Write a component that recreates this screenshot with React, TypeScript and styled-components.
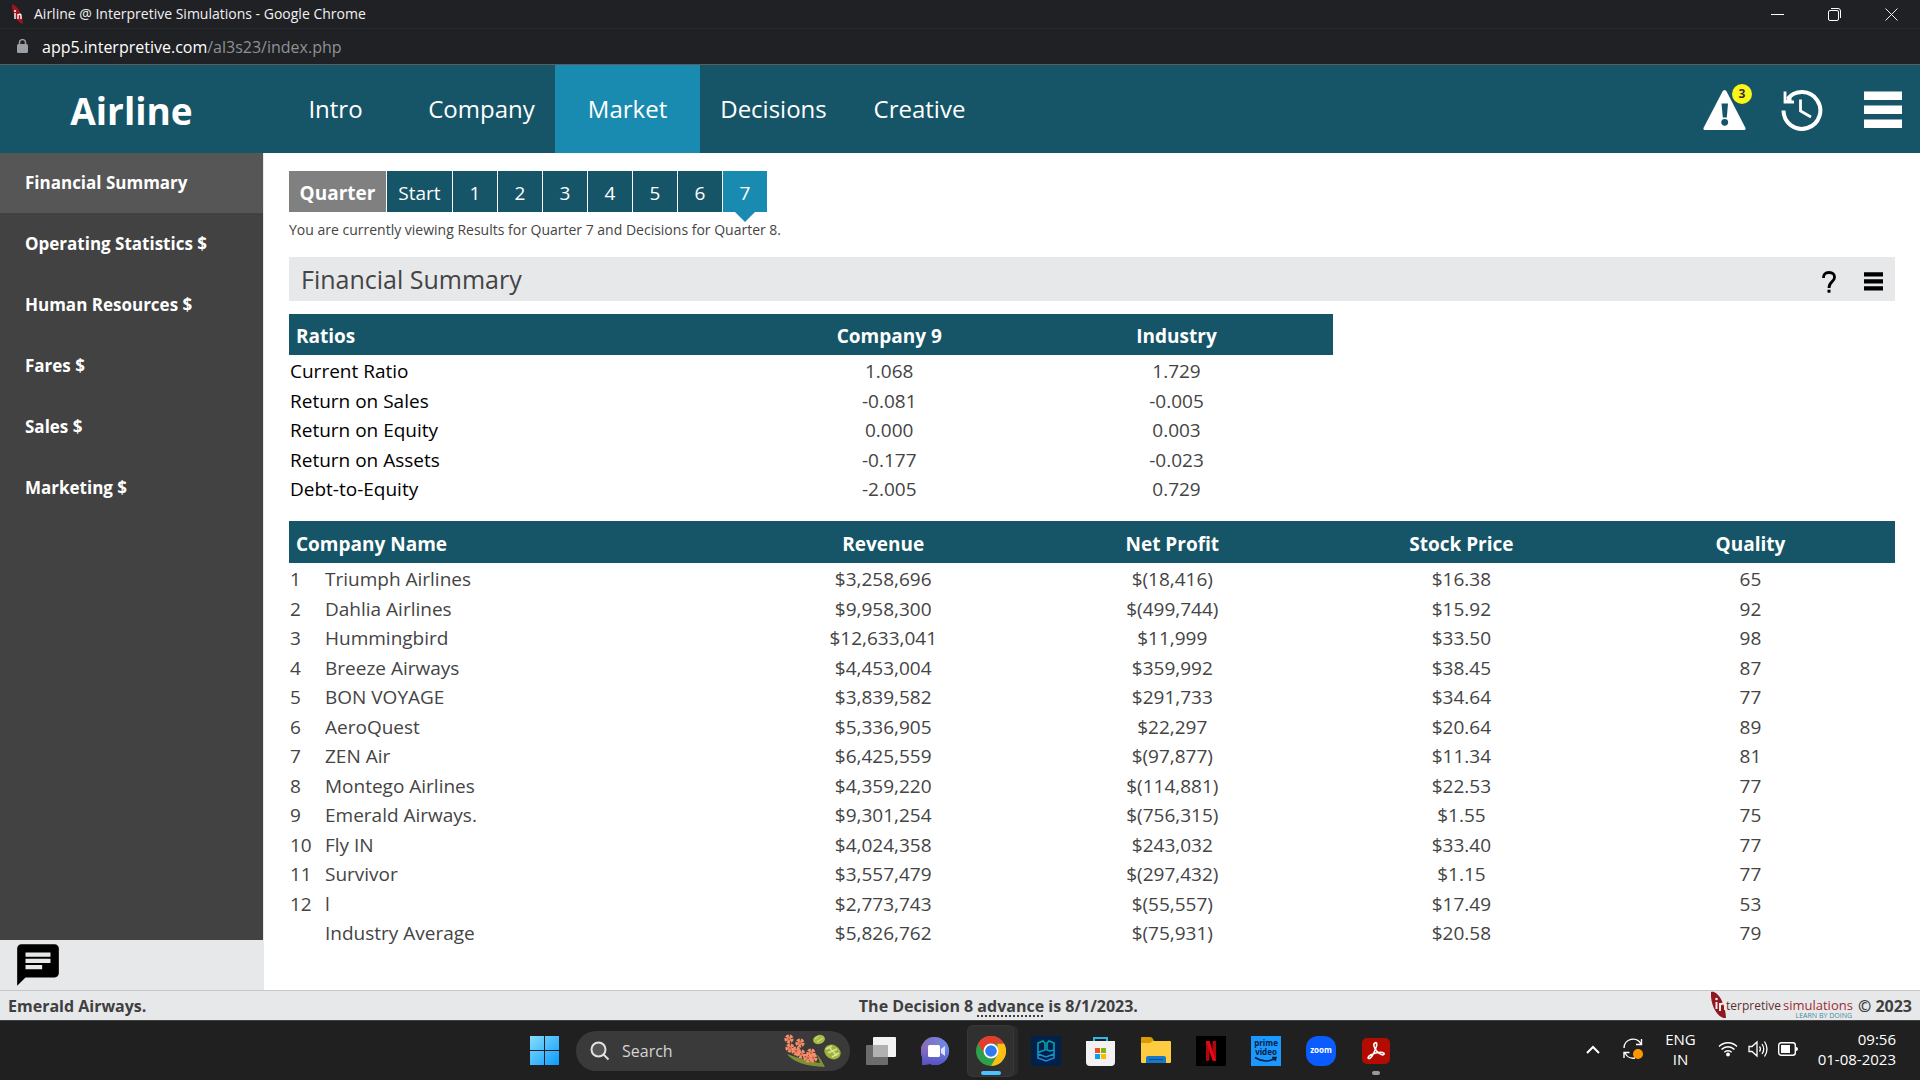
import React from "react";
import styled, { createGlobalStyle, css } from "styled-components";

const teal = "#165567";
const blue = "#1a8bb0";
const pale = "#e7e8ea";

const GlobalStyle = createGlobalStyle`
  * { box-sizing: border-box; }
  body {
    margin: 0;
    background: #fff;
    color: #444;
    font-family: "Open Sans", "Noto Sans", sans-serif;
    font-size: 19px;
  }
  button, input { font: inherit; color: inherit; }
  button { border: 0; padding: 0; background: none; cursor: pointer; }
  a { color: inherit; text-decoration: none; }
  svg { display: block; }
`;

const Screen = styled.div`
  display: flex;
  flex-direction: column;
  min-height: 100vh;
`;

/* ---------- browser window ---------- */

const TitleBar = styled.header`
  display: flex;
  align-items: center;
  height: 29px;
  padding: 0 12px;
  gap: 10px;
  background: #202124;
  border-bottom: 1px solid #27282b;
  color: #f1f1f1;
  font-size: 14px;
  line-height: 28px;
`;

const WindowButtons = styled.div`
  display: flex;
  gap: 31px;
  margin-left: auto;
`;

const WindowButton = styled.button`
  display: grid;
  place-items: center;
  width: 26px;
  height: 26px;
  &:last-child { margin-right: 4px; }
`;

const AddressBar = styled.div`
  display: flex;
  align-items: center;
  gap: 14px;
  height: 36px;
  padding: 0 17px;
  background: #202124;
  border-bottom: 1px solid #5d5d5f;
  color: #8f9195;
  font-size: 16px;
  strong { color: #fff; font-weight: 400; }
`;

/* ---------- application header ---------- */

const AppHeader = styled.header`
  display: flex;
  align-items: stretch;
  height: 88px;
  background: ${teal};
  color: #fff;
`;

const Brand = styled.h1`
  width: 263px;
  margin: 0;
  padding-top: 2px;
  font-size: 37px;
  line-height: 88px;
  text-align: center;
`;

const MainNav = styled.nav`
  display: flex;
  gap: 1px;
`;

const NavLink = styled.a<{ $active?: boolean }>`
  width: 145px;
  background: ${(p) => (p.$active ? blue : "transparent")};
  font-size: 24px;
  line-height: 88px;
  text-align: center;
`;

const HeaderTools = styled.div`
  display: grid;
  grid-template-columns: 43px 48px 38px;
  align-items: center;
  justify-items: start;
  column-gap: 35px;
  margin-left: auto;
  padding: 2px 18px 0 0;
`;

const ToolButton = styled.button`
  position: relative;
  color: inherit;
`;

const Badge = styled.span`
  position: absolute;
  top: -6px;
  right: -6px;
  width: 20px;
  height: 20px;
  border-radius: 50%;
  background: #fcf51a;
  color: #333;
  font-size: 12px;
  font-weight: 700;
  line-height: 20px;
  text-align: center;
`;

/* ---------- body ---------- */

const Body = styled.div`
  display: flex;
  flex: 1;
`;

const Sidebar = styled.aside`
  display: flex;
  flex-direction: column;
  width: 264px;
  background: ${pale};
`;

const SideNav = styled.nav`
  display: flex;
  flex: 1;
  flex-direction: column;
  gap: 1px;
  margin-right: 1px;
  background: #424242;
`;

const SideLink = styled.a<{ $active?: boolean }>`
  height: 60px;
  padding-left: 25px;
  background: ${(p) => (p.$active ? "#555655" : "transparent")};
  color: #fff;
  font-size: 17px;
  font-weight: 700;
  line-height: 60px;
`;

const ChatArea = styled.div`
  height: 50px;
  padding-left: 13px;
  color: #000;
`;

const Main = styled.main`
  flex: 1;
  padding: 18px 25px 32px;
`;

const QuarterBar = styled.div`
  display: flex;
  gap: 1px;
  height: 41px;
`;

const quarterCell = css`
  color: #fff;
  font-size: 19px;
  line-height: 44px;
  text-align: center;
`;

const QuarterLabel = styled.span`
  ${quarterCell}
  width: 97px;
  background: #808080;
  font-weight: 700;
`;

const QuarterButton = styled.button<{ $wide?: boolean; $active?: boolean }>`
  ${quarterCell}
  position: relative;
  width: ${(p) => (p.$wide ? 65 : 44)}px;
  background: ${(p) => (p.$active ? blue : teal)};
  ${(p) =>
    p.$active &&
    css`
      &::after {
        content: "";
        position: absolute;
        top: 100%;
        left: 12px;
        border: 10px solid transparent;
        border-top-color: ${blue};
        border-bottom-width: 0;
      }
    `}
`;

const ViewNote = styled.p`
  margin: 6px 0 15px;
  font-size: 14px;
  line-height: 24px;
`;

const SectionBar = styled.div`
  display: flex;
  align-items: center;
  height: 44px;
  padding: 0 12px;
  background: ${pale};
`;

const SectionTitle = styled.h2`
  margin: 0;
  font-size: 25px;
  font-weight: 400;
  line-height: 44px;
`;

const SectionTools = styled.div`
  display: flex;
  align-items: center;
  gap: 28px;
  margin-left: auto;
  padding-top: 5px;
  color: #000;
`;

const DataTable = styled.table<{ $narrow?: boolean }>`
  width: ${(p) => (p.$narrow ? "65%" : "100%")};
  margin-top: ${(p) => (p.$narrow ? 13 : 18)}px;
  border-collapse: collapse;
  table-layout: fixed;
  text-align: center;
  th { height: ${(p) => (p.$narrow ? 41 : 42)}px; }
`;

const HeadCell = styled.th<{ $first?: boolean; $inset?: boolean }>`
  padding: ${(p) => (p.$first ? "3px 0 0 7px" : p.$inset ? "3px 10px 0 0" : "3px 0 0")};
  background: ${teal};
  color: #fff;
  line-height: 26px;
  text-align: ${(p) => (p.$first ? "left" : "center")};
`;

const Row = styled.tr`
  height: 30px;
  line-height: 26px;
  vertical-align: top;
  &:nth-child(even) { height: 29px; }
`;

const Cell = styled.td<{ $left?: boolean; $dark?: boolean; $inset?: boolean }>`
  padding: 3px ${(p) => (p.$inset ? 10 : 0)}px 0 ${(p) => (p.$left ? 1 : 0)}px;
  color: ${(p) => (p.$dark ? "#000" : "#444")};
  text-align: ${(p) => (p.$left ? "left" : "center")};
`;

const StatusBar = styled.footer`
  display: grid;
  grid-template-columns: 20% 64% 16%;
  align-items: center;
  height: 30px;
  background: ${pale};
  border-top: 1px solid #c6c7c9;
  color: #3f3f3f;
  font-size: 16px;
  font-weight: 700;
  line-height: 28px;
`;

const StatusLeft = styled.span`
  padding-left: 8px;
`;

const StatusCenter = styled.span`
  text-align: center;
  abbr {
    text-decoration: underline dotted 2px;
    text-underline-offset: 4px;
  }
`;

const StatusRight = styled.span`
  display: flex;
  align-items: center;
  justify-content: flex-end;
  gap: 5px;
  padding-right: 8px;
`;

/* ---------- taskbar ---------- */

const TaskBar = styled.footer`
  display: grid;
  grid-template-columns: 1fr auto 1fr;
  align-items: center;
  height: 60px;
  background: #202020;
  border-top: 1px solid #404244;
  color: #fff;
`;

const TaskCenter = styled.div`
  grid-column: 2;
  display: flex;
  align-items: center;
  height: 100%;
`;

const TaskButton = styled.button<{ $current?: boolean; $open?: boolean }>`
  position: relative;
  display: grid;
  place-items: center;
  width: 45px;
  height: 50px;
  margin: 0 5px;
  border-radius: 5px;
  ${(p) => p.$current && "background: #303030; box-shadow: 0 0 0 1px #383838, 5px 0 0 #2b2b2b;"}
  ${(p) =>
    (p.$current || p.$open) &&
    css`
      &::after {
        content: "";
        position: absolute;
        bottom: 1px;
        left: 50%;
        width: ${p.$current ? 20 : 8}px;
        height: 4px;
        margin-left: ${p.$current ? -10 : -4}px;
        border-radius: 2px;
        background: ${p.$current ? "#4cc2ff" : "#9a9a9a"};
      }
    `}
`;

const SearchBox = styled.label`
  display: flex;
  align-items: center;
  gap: 12px;
  width: 274px;
  height: 40px;
  margin: 0 3px 0 4px;
  padding: 0 8px 0 14px;
  border-radius: 20px;
  background: #3a3a3a;
  input {
    flex: 1;
    min-width: 0;
    padding: 0;
    border: 0;
    outline: 0;
    background: none;
    font-size: 16px;
    &::placeholder { color: #d4d4d4; opacity: 1; }
  }
`;

const Tray = styled.div`
  display: flex;
  align-items: center;
  justify-content: flex-end;
  padding: 0 24px 3px 0;
  font-size: 15px;
  line-height: 20px;
`;

const TrayButton = styled.button<{ $gap?: number }>`
  margin-right: ${(p) => p.$gap ?? 0}px;
  text-align: center;
`;

const TrayClock = styled.div`
  text-align: right;
`;

/* ---------- drawings ---------- */

const Favicon = () => (
  <svg width="12" height="20" viewBox="0 0 12 20">
    <path d="M0 0C5 2 10 8 11 20C4 18 0 9 0 0Z" fill="#a3141c" />
    <path d="M3 9v6M6 15v-5M6 11q3-2 3 1v3" stroke="#fff" strokeWidth="1.4" fill="none" />
    <circle cx="3" cy="7" r="1" fill="#fff" />
  </svg>
);

const Lock = () => (
  <svg width="11" height="15" viewBox="0 0 11 15">
    <rect y="5" width="11" height="9" rx="1.5" fill="#9aa0a6" />
    <path d="M2.5 6V3.6a3 3 0 0 1 6 0V6" fill="none" stroke="#9aa0a6" strokeWidth="1.5" />
  </svg>
);

const Warning = () => (
  <svg width="43" height="40" viewBox="0 0 43 40">
    <path d="M21.5 0Q22.8 0 23.6 1.5L42.5 38q.5 2-1 2H1.5q-1.5 0-1-2L19.5 1.5Q20.3 0 21.5 0Z" fill="#fff" />
    <path d="M18.5 13.5h6.5l-1.2 14h-4z" fill={teal} />
    <circle cx="21.7" cy="32.3" r="3.4" fill={teal} />
  </svg>
);

const History = () => (
  <svg width="42" height="42" viewBox="0 0 42 42">
    <path d="M6.5 10A18.4 18.4 0 1 1 2.5 21.5" fill="none" stroke="#fff" strokeWidth="4" />
    <path d="M4 2.5V13H13" fill="none" stroke="#fff" strokeWidth="2.8" />
    <path d="M4 13L10 6v7z" fill="#fff" stroke="#fff" />
    <path d="M19.5 10.5V22L30 28" fill="none" stroke="#fff" strokeWidth="2.8" />
  </svg>
);

const Bars = ({ size }: { size: number }) => (
  <svg width={size} height={size} viewBox="0 0 38 38">
    <path d="M0 .5h38V9H0zM0 14.5h38V23H0zM0 28.5h38V37H0z" fill="currentColor" />
  </svg>
);

const Question = () => (
  <svg width="14" height="22" viewBox="0 0 14 22">
    <path d="M1.5 7Q1.3 1.5 7 1.5T12.5 6.5C12.5 10.5 7 11 7 17" fill="none" stroke="#000" strokeWidth="2.8" />
    <rect x="5.5" y="18.7" width="3" height="3" />
  </svg>
);

const Chat = () => (
  <svg width="50" height="50" viewBox="0 0 24 24">
    <path
      fill="currentColor"
      d="M20 2H4c-1.1 0-1.99.9-1.99 2L2 22l4-4h14c1.1 0 2-.9 2-2V4c0-1.1-.9-2-2-2zM6 9h12v2H6V9zm8 5H6v-2h8v2zm4-6H6V6h12v2z"
    />
  </svg>
);

const SimLogo = () => (
  <svg width="142" height="29" viewBox="0 0 142 29" fontFamily="Open Sans, Noto Sans, sans-serif" fontWeight="400">
    <path d="M0 1C5-1 14 9 15 27C6 28-1 13 0 1Z" fill="#8f1820" />
    <path d="M5.5 11v7M9 20v-8M9 14q5-4 5 1v4" fill="none" stroke="#f3e9e9" strokeWidth="2" />
    <circle cx="5.5" cy="8" r="1.3" fill="#f3e9e9" />
    <text x="15" y="19" fontSize="12" fill="#5f2f2e">terpretive</text>
    <text x="72" y="19" fontSize="13" fill="#a02c32">simulations</text>
    <text x="141" y="27" fontSize="7" textAnchor="end" fill="#3e8b9d">LEARN BY DOING</text>
  </svg>
);

const Windows = () => (
  <svg width="29" height="29" viewBox="0 0 29 29">
    <defs>
      <linearGradient id="win" x1="0" y1="0" x2="1" y2="1">
        <stop stopColor="#86ddfb" />
        <stop offset="1" stopColor="#0a9bff" />
      </linearGradient>
    </defs>
    <path d="M0 0h14v14H0zM15 0h14v14H15zM0 15h14v14H0zM15 15h14v14H15z" fill="url(#win)" />
  </svg>
);

const Magnifier = () => (
  <svg width="20" height="20" viewBox="0 0 20 20" fill="#555" stroke="#e2e2e2" strokeWidth="2">
    <circle cx="8.5" cy="8.5" r="7" />
    <path d="M13.5 13.5L18.5 18.5" />
  </svg>
);

const flowers = [[5, 5], [16, 9], [6, 14], [17, 20], [27, 19], [29, 24], [12, 17], [24, 24]];

const Bouquet = () => (
  <svg width="58" height="34" viewBox="0 0 58 34">
    <path d="M3 20Q12 32 41 33Q37 25 33 20L36 29Q22 27 3 20Z" fill="#7d9132" />
    {flowers.map(([x, y]) => (
      <g key={`${x}-${y}`}>
        <circle cx={x} cy={y} r="3.3" fill="none" stroke="#f6906c" strokeWidth="2.6" strokeDasharray="3 1" />
        <circle cx={x} cy={y} r="2.3" fill="#f08062" />
        <circle cx={x} cy={y} r=".8" fill="#963c2c" />
      </g>
    ))}
    <ellipse cx="35" cy="5.5" rx="6" ry="4.5" fill="#a8bb45" transform="rotate(-15 35 5.5)" />
    <path d="M31 5l4-3M33 8l6-4" stroke="#dbe394" />
    <ellipse cx="48.5" cy="18" rx="8.5" ry="7" fill="#9db33c" transform="rotate(30 48.5 18)" />
    <path d="M42 15l6-3M44 19l9-4M48 23l7-4M45 13l8 9" stroke="#dbe394" strokeWidth="1.5" />
  </svg>
);

const TaskView = () => (
  <svg width="30" height="28" viewBox="0 0 30 28">
    <rect x="7" width="23" height="20" rx="1" fill="#f3f3f3" />
    <rect y="8" width="22" height="20" rx="1" fill="#6c6c6c" />
    <path d="M7 8h15v12H7z" fill="#b1b1b1" />
  </svg>
);

const VideoChat = () => (
  <svg width="30" height="28" viewBox="0 0 30 28">
    <defs>
      <linearGradient id="vc" x1="0" y1="0" x2="1" y2="0">
        <stop stopColor="#8b68b4" />
        <stop offset="1" stopColor="#6a8cec" />
      </linearGradient>
      <linearGradient id="vcs" x1="0" y1="0" x2="0" y2="1">
        <stop offset=".4" stopColor="#5552c8" stopOpacity="0" />
        <stop offset="1" stopColor="#5552c8" />
      </linearGradient>
    </defs>
    <path d="M15 0a14 14 0 1 1-6 27L1 28V20A14 14 0 0 1 15 0Z" fill="url(#vc)" />
    <path d="M15 0a14 14 0 1 1-6 27L1 28V20A14 14 0 0 1 15 0Z" fill="url(#vcs)" />
    <rect x="7" y="8" width="12" height="12" rx="1.5" fill="#fff" />
    <path d="M20 12l4-3v10l-4-3z" fill="#e2e5ff" />
  </svg>
);

const Chrome = () => (
  <svg width="30" height="30" viewBox="0 0 48 48">
    <circle cx="24" cy="24" r="24" fill="#2da04b" />
    <path d="M44.8 12A24 24 0 0 1 24 48L34.4 30V12Z" fill="#fdbf13" />
    <path d="M3.2 12A24 24 0 0 1 44.8 12H24A12 12 0 0 0 13.6 30Z" fill="#e63c30" />
    <circle cx="24" cy="24" r="12" fill="#fff" />
    <circle cx="24" cy="24" r="9.3" fill="#3079ee" />
  </svg>
);

const PgApp = () => (
  <svg width="30" height="30" viewBox="0 0 30 30">
    <defs>
      <linearGradient id="pg" x1="0" y1="0" x2="0" y2="1">
        <stop stopColor="#00a99f" />
        <stop offset="1" stopColor="#2382d8" />
      </linearGradient>
    </defs>
    <path fill="#01204a" d="M0 0h30v30H0z" />
    <path
      d="M7 23V7l5-2 2 2v7l-7 2.5M23 14l-4 1-3-1V7l2-2 5 2v15l-8 3-8-3M7 18l8 3 8-3"
      fill="none"
      stroke="url(#pg)"
      strokeWidth="1.6"
    />
  </svg>
);

const Store = () => (
  <svg width="30" height="30" viewBox="0 0 30 30">
    <path d="M8 7V2h13v5" fill="none" stroke="#2cb8ea" strokeWidth="2" />
    <path d="M0 5h29v21q0 4-4 4H4q-4 0-4-4z" fill="#f2f2f2" />
    <path d="M9 12h5v5H9z" fill="#f25022" />
    <path d="M15 12h5v5h-5z" fill="#7fba00" />
    <path d="M9 18h5v5H9z" fill="#00a4ef" />
    <path d="M15 18h5v5h-5z" fill="#ffb900" />
  </svg>
);

const Folder = () => (
  <svg width="30" height="27" viewBox="0 0 30 27">
    <path d="M0 1q0-1 1-1h8q2 0 3 2l1 2-3 4H0z" fill="#dc9a05" />
    <path d="M0 6h9l3-2h17q1 0 1 1v20q0 1-1 1H1q-1 0-1-1z" fill="#fdcc40" />
    <path d="M5 26v-5q0-2 2-2h16q2 0 2 2v5z" fill="#1777c9" />
    <path d="M8 22.5h14" stroke="#0c508e" />
  </svg>
);

const Netflix = () => (
  <svg width="30" height="30" viewBox="0 0 30 30">
    <path d="M0 0h30v30H0z" />
    <path d="M10 5h3.5v19.5L10 25zM16.5 5H20v20l-3.5-.5z" fill="#b1060f" />
    <path d="M10 5h3.5L20 25l-3.5-.5z" fill="#e50914" />
  </svg>
);

const Prime = () => (
  <svg width="30" height="30" viewBox="0 0 30 30" fontFamily="Open Sans, sans-serif" fontWeight="700">
    <path fill="#1a98ff" d="M0 0h30v30H0z" />
    <text x="15" y="10" fontSize="8" textAnchor="middle" fill="#06203c">prime</text>
    <text x="15" y="19" fontSize="8" textAnchor="middle" fill="#06203c">video</text>
    <path d="M4 21.5Q14 28 24 22.5M21 21.5h4l-1 3.5" fill="none" stroke="#06203c" strokeWidth="1.5" />
  </svg>
);

const Zoom = () => (
  <svg width="30" height="30" viewBox="0 0 30 30">
    <rect width="30" height="30" rx="12" fill="#0b5cff" />
    <text x="15" y="17" fontSize="8" fontWeight="700" textAnchor="middle" fill="#fff" fontFamily="Open Sans, sans-serif">
      zoom
    </text>
  </svg>
);

const Acrobat = () => (
  <svg width="28" height="28" viewBox="0 0 28 28">
    <rect y="1" width="28" height="26" rx="5" fill="#b30b00" />
    <path
      d="M13 6c2-1.500 2.500 2 .5 6-1.500 4-4 8.500-6 9.500-2 .5-2-2 1-3.500 4-2 9-3 12-2.500 3 .8 1.500 3-1 2-3-1-7-5-7.500-8.500C11.500 7.500 12 6.500 13 6Z"
      fill="none"
      stroke="#fff"
      strokeWidth="1.6"
    />
  </svg>
);

const Chevron = () => (
  <svg width="14" height="9" viewBox="0 0 14 9" fill="none" stroke="#fff" strokeWidth="2">
    <path d="M1 8l6-6 6 6" />
  </svg>
);

const Sync = () => (
  <svg width="21" height="22" viewBox="0 0 21 22" fill="none" stroke="#fff" strokeWidth="1.4">
    <path d="M1 10A9 9 0 0 1 18 6M18.5 1v5.5H13M1 20v-5.5h5.5M2 15A9 9 0 0 0 12 20" />
    <circle cx="15" cy="16" r="5" fill="#ff9800" stroke="none" />
  </svg>
);

const Wifi = () => (
  <svg width="20" height="16" viewBox="0 0 20 16" fill="none" stroke="#fff" strokeWidth="1.5">
    <path d="M1 5.5a12.5 12.5 0 0 1 18 0M3.5 8.5a9 9 0 0 1 13 0M6.3 11.2a5.2 5.2 0 0 1 7.4 0" />
    <circle cx="10" cy="13.5" r="1.9" fill="#fff" stroke="none" />
  </svg>
);

const Volume = () => (
  <svg width="20" height="18" viewBox="0 0 20 18" fill="none" stroke="#fff" strokeWidth="1.3">
    <path d="M1 6.5h3L9 2v14l-5-4.5H1zM11.5 6.5q1.8 2.5 0 5M14 4q3.5 5 0 10M16.5 1.5q5 7.5 0 15" />
  </svg>
);

const Battery = () => (
  <svg width="20" height="14" viewBox="0 0 20 14">
    <rect x=".7" y=".7" width="16.6" height="12.6" rx="2.5" fill="none" stroke="#fff" strokeWidth="1.4" />
    <rect x="3" y="3" width="9" height="8" fill="#fff" />
    <path d="M18 5q2 0 2 2t-2 2z" fill="#fff" />
  </svg>
);

/* ---------- data ---------- */

const navItems = ["Intro", "Company", "Market", "Decisions", "Creative"];
const sideItems = ["Financial Summary", "Operating Statistics $", "Human Resources $", "Fares $", "Sales $", "Marketing $"];
const quarters = ["Start", "1", "2", "3", "4", "5", "6", "7"];

const ratios = [
  ["Current Ratio", "1.068", "1.729"],
  ["Return on Sales", "-0.081", "-0.005"],
  ["Return on Equity", "0.000", "0.003"],
  ["Return on Assets", "-0.177", "-0.023"],
  ["Debt-to-Equity", "-2.005", "0.729"],
];

const companies = [
  ["1", "Triumph Airlines", "$3,258,696", "$(18,416)", "$16.38", "65"],
  ["2", "Dahlia Airlines", "$9,958,300", "$(499,744)", "$15.92", "92"],
  ["3", "Hummingbird", "$12,633,041", "$11,999", "$33.50", "98"],
  ["4", "Breeze Airways", "$4,453,004", "$359,992", "$38.45", "87"],
  ["5", "BON VOYAGE", "$3,839,582", "$291,733", "$34.64", "77"],
  ["6", "AeroQuest", "$5,336,905", "$22,297", "$20.64", "89"],
  ["7", "ZEN Air", "$6,425,559", "$(97,877)", "$11.34", "81"],
  ["8", "Montego Airlines", "$4,359,220", "$(114,881)", "$22.53", "77"],
  ["9", "Emerald Airways.", "$9,301,254", "$(756,315)", "$1.55", "75"],
  ["10", "Fly IN", "$4,024,358", "$243,032", "$33.40", "77"],
  ["11", "Survivor", "$3,557,479", "$(297,432)", "$1.15", "77"],
  ["12", "l", "$2,773,743", "$(55,557)", "$17.49", "53"],
  ["", "Industry Average", "$5,826,762", "$(75,931)", "$20.58", "79"],
];

const apps = [
  { name: "Task view", icon: <TaskView /> },
  { name: "Chat", icon: <VideoChat /> },
  { name: "Chrome", icon: <Chrome />, current: true },
  { name: "Games", icon: <PgApp /> },
  { name: "Store", icon: <Store /> },
  { name: "File Explorer", icon: <Folder /> },
  { name: "Netflix", icon: <Netflix /> },
  { name: "Prime Video", icon: <Prime /> },
  { name: "Zoom", icon: <Zoom /> },
  { name: "Acrobat", icon: <Acrobat />, open: true },
];

export default function App() {
  return (
    <Screen>
      <GlobalStyle />
      <TitleBar>
        <Favicon />
        <span>Airline @ Interpretive Simulations - Google Chrome</span>
        <WindowButtons>
          <WindowButton aria-label="Minimize">
            <svg width="13" height="13" viewBox="0 0 13 13"><path d="M0 6.5h13" stroke="#fff" /></svg>
          </WindowButton>
          <WindowButton aria-label="Restore">
            <svg width="13" height="13" viewBox="0 0 13 13" fill="none" stroke="#fff">
              <rect x=".5" y="2.5" width="10" height="10" rx="1.5" />
              <path d="M3 .5h7q2.5 0 2.5 2.5v7" />
            </svg>
          </WindowButton>
          <WindowButton aria-label="Close">
            <svg width="13" height="13" viewBox="0 0 13 13"><path d="M.5.5l12 12M12.5.5l-12 12" stroke="#eee" /></svg>
          </WindowButton>
        </WindowButtons>
      </TitleBar>
      <AddressBar>
        <Lock />
        <span><strong>app5.interpretive.com</strong>/al3s23/index.php</span>
      </AddressBar>

      <AppHeader>
        <Brand>Airline</Brand>
        <MainNav>
          {navItems.map((item) => (
            <NavLink key={item} href="#" $active={item === "Market"}>{item}</NavLink>
          ))}
        </MainNav>
        <HeaderTools>
          <ToolButton aria-label="Alerts"><Warning /><Badge>3</Badge></ToolButton>
          <ToolButton aria-label="History"><History /></ToolButton>
          <ToolButton aria-label="Menu"><Bars size={38} /></ToolButton>
        </HeaderTools>
      </AppHeader>

      <Body>
        <Sidebar>
          <SideNav>
            {sideItems.map((item, i) => (
              <SideLink key={item} href="#" $active={i === 0}>{item}</SideLink>
            ))}
          </SideNav>
          <ChatArea><ToolButton aria-label="Messages"><Chat /></ToolButton></ChatArea>
        </Sidebar>

        <Main>
          <QuarterBar>
            <QuarterLabel>Quarter</QuarterLabel>
            {quarters.map((q) => (
              <QuarterButton key={q} $wide={q === "Start"} $active={q === "7"}>{q}</QuarterButton>
            ))}
          </QuarterBar>
          <ViewNote>You are currently viewing Results for Quarter 7 and Decisions for Quarter 8.</ViewNote>

          <SectionBar>
            <SectionTitle>Financial Summary</SectionTitle>
            <SectionTools>
              <ToolButton aria-label="Help"><Question /></ToolButton>
              <ToolButton aria-label="Options"><Bars size={19} /></ToolButton>
            </SectionTools>
          </SectionBar>

          <DataTable $narrow>
            <colgroup>
              <col style={{ width: "44%" }} />
              <col style={{ width: "27%" }} />
              <col />
            </colgroup>
            <thead>
              <tr>
                <HeadCell scope="col" $first>Ratios</HeadCell>
                <HeadCell scope="col">Company 9</HeadCell>
                <HeadCell scope="col" $inset>Industry</HeadCell>
              </tr>
            </thead>
            <tbody>
              {ratios.map(([name, company, industry]) => (
                <Row key={name}>
                  <Cell $left $dark>{name}</Cell>
                  <Cell>{company}</Cell>
                  <Cell $inset>{industry}</Cell>
                </Row>
              ))}
            </tbody>
          </DataTable>

          <DataTable>
            <colgroup>
              <col style={{ width: "35px" }} />
              <col />
              <col style={{ width: "18%" }} />
              <col style={{ width: "18%" }} />
              <col style={{ width: "18%" }} />
              <col style={{ width: "18%" }} />
            </colgroup>
            <thead>
              <tr>
                <HeadCell scope="col" colSpan={2} $first>Company Name</HeadCell>
                <HeadCell scope="col">Revenue</HeadCell>
                <HeadCell scope="col">Net Profit</HeadCell>
                <HeadCell scope="col">Stock Price</HeadCell>
                <HeadCell scope="col">Quality</HeadCell>
              </tr>
            </thead>
            <tbody>
              {companies.map((row) => (
                <Row key={row[1]}>
                  {row.map((value, i) => (
                    <Cell key={i} $left={i < 2}>{value}</Cell>
                  ))}
                </Row>
              ))}
            </tbody>
          </DataTable>
        </Main>
      </Body>

      <StatusBar>
        <StatusLeft>Emerald Airways.</StatusLeft>
        <StatusCenter>The Decision 8 <abbr>advance</abbr> is 8/1/2023.</StatusCenter>
        <StatusRight><SimLogo />© 2023</StatusRight>
      </StatusBar>

      <TaskBar>
        <TaskCenter>
          <TaskButton aria-label="Start"><Windows /></TaskButton>
          <SearchBox>
            <Magnifier />
            <input type="search" placeholder="Search" aria-label="Search" />
            <Bouquet />
          </SearchBox>
          {apps.map((app) => (
            <TaskButton key={app.name} aria-label={app.name} $current={app.current} $open={app.open}>
              {app.icon}
            </TaskButton>
          ))}
        </TaskCenter>
        <Tray>
          <TrayButton $gap={23} aria-label="Show hidden icons"><Chevron /></TrayButton>
          <TrayButton $gap={21} aria-label="Updates"><Sync /></TrayButton>
          <TrayButton $gap={22}>ENG<br />IN</TrayButton>
          <TrayButton $gap={10} aria-label="Network"><Wifi /></TrayButton>
          <TrayButton $gap={10} aria-label="Volume"><Volume /></TrayButton>
          <TrayButton $gap={20} aria-label="Battery"><Battery /></TrayButton>
          <TrayClock>09:56<br />01-08-2023</TrayClock>
        </Tray>
      </TaskBar>
    </Screen>
  );
}
